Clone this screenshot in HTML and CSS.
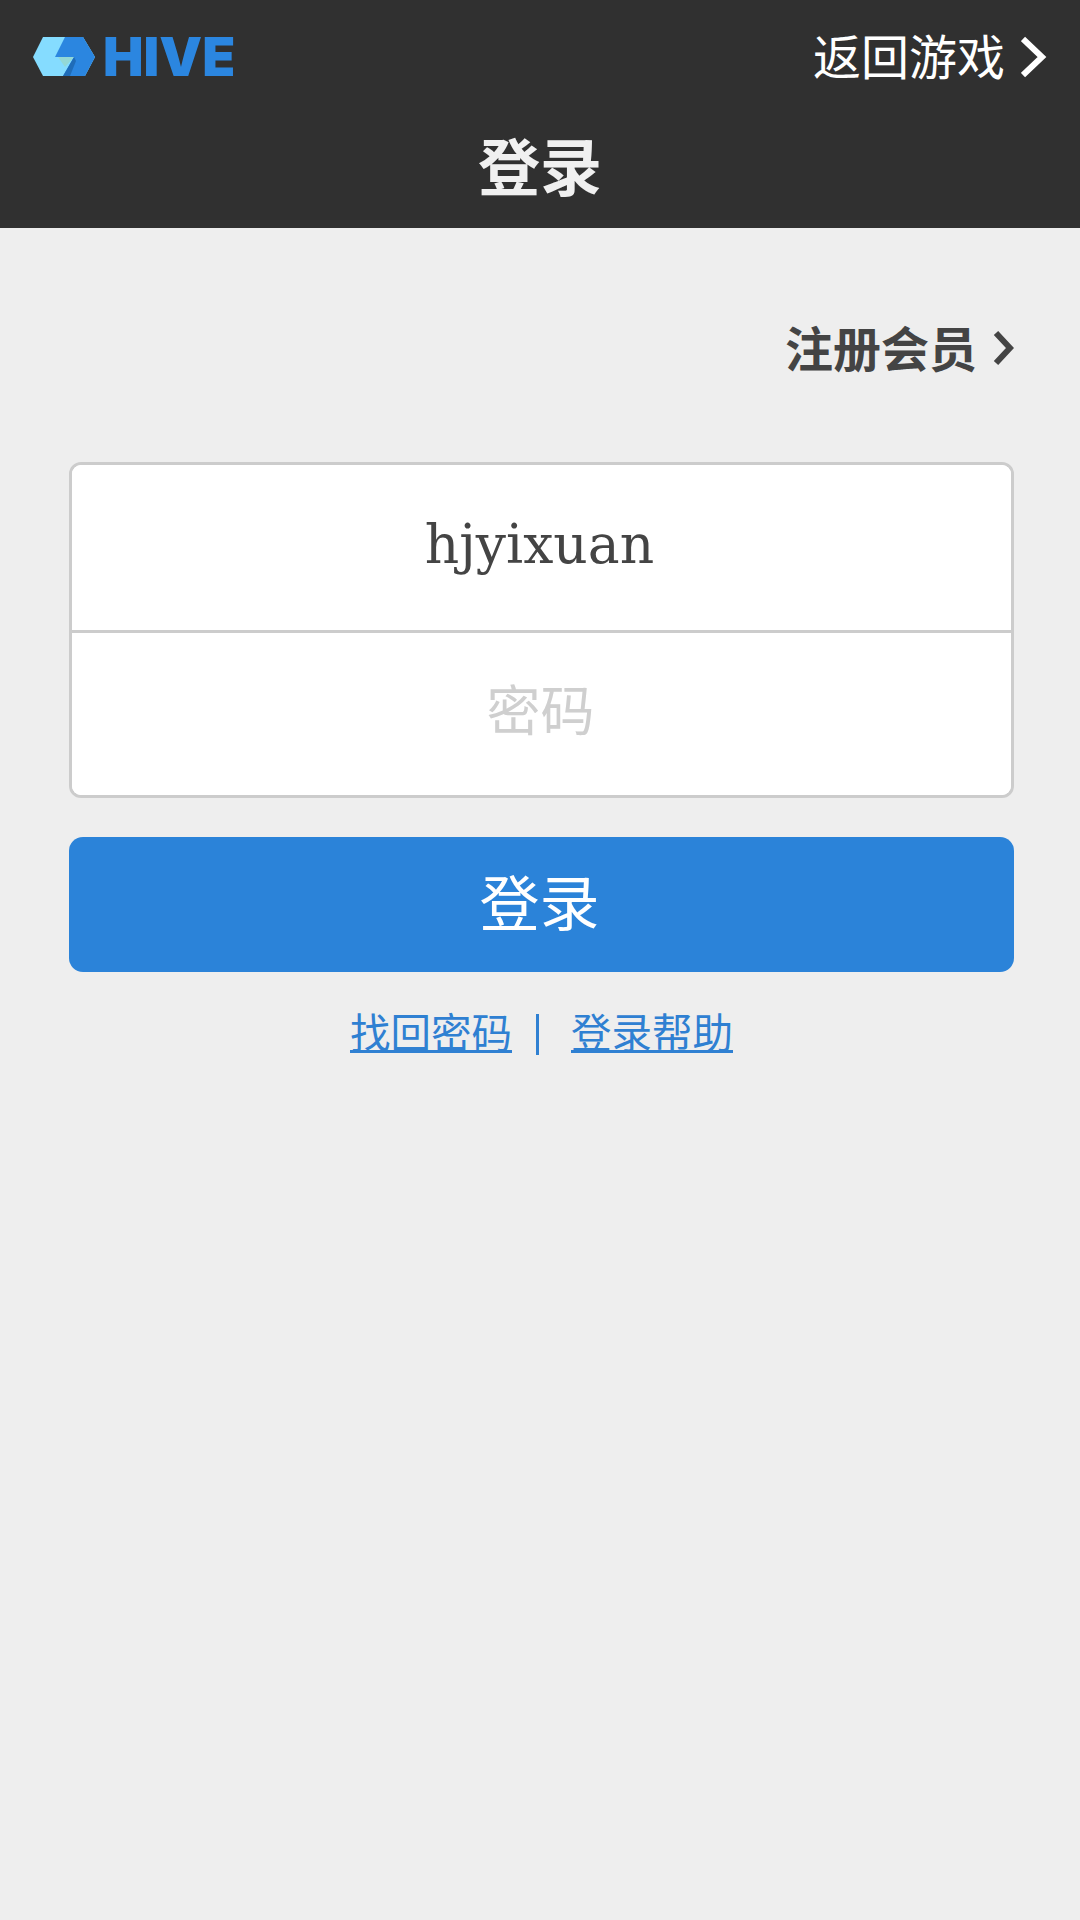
FILE: index.html
```html
<!DOCTYPE html>
<html lang="zh-CN">
<head>
    <meta charset="UTF-8">
    <meta name="viewport" content="width=device-width, initial-scale=1.0">
    <title>登录</title>
    <link rel="stylesheet" href="styles.css">
</head>
<body>

    <header class="header">
        <div class="topbar">
            <div class="logo">
                <svg class="logo-mark" width="62" height="39" viewBox="0 0 62 39">
                    <path d="M10 0H50L62 20L52 39H10L0 20Z" fill="#85dcff"/>
                    <path d="M32 0H50L62 20L52 39H30L41 20H22Z" fill="#2b86e0"/>
                    <path d="M25 20H41L32 30Z" fill="#93d8d6"/>
                    <path d="M41 20L30 39H37L43 24Z" fill="#1f6cb8"/>
                </svg>
                <span class="logo-text">HIVE</span>
            </div>
            <a class="back" href="#">
                返回游戏
                <svg class="chevron" width="28" height="44" viewBox="0 0 28 44">
                    <path d="M2 4L21 22L2 40" fill="none" stroke="#fff" stroke-width="6"/>
                </svg>
            </a>
        </div>
        <h1 class="title">登录</h1>
    </header>

    <main class="content">
        <div class="register-row">
            <a class="register" href="#">
                注册会员
                <svg class="chevron" width="22" height="38" viewBox="0 0 22 38">
                    <path d="M4 4L18 19L4 34" fill="none" stroke="#444" stroke-width="6"/>
                </svg>
            </a>
        </div>

        <form class="login-form">
            <div class="fields">
                <input class="field" type="text" value="hjyixuan">
                <input class="field field-password" type="password" placeholder="密码">
            </div>
            <button class="submit" type="button">登录</button>
        </form>

        <div class="links">
            <a href="#">找回密码</a>
            <span class="sep"></span>
            <a href="#">登录帮助</a>
        </div>
    </main>

</body>
</html>
```

FILE: styles.css
```css
* {
    margin: 0;
    padding: 0;
    box-sizing: border-box;
    font-family: "Noto Sans CJK SC", "Noto Sans", sans-serif;
}

body {
    width: 1080px;
    min-height: 1920px;
    background: #eeeeee;
}

.header {
    height: 228px;
    background: #303030;
    color: #fff;
}

.topbar {
    height: 108px;
    padding: 0 33px;
    display: flex;
    justify-content: space-between;
    align-items: center;
}

.logo {
    display: flex;
    align-items: center;
    gap: 8px;
    margin-top: 5px;
}

.logo-text {
    font-family: Inter, "Liberation Sans", sans-serif;
    font-size: 54px;
    font-weight: 900;
    line-height: 40px;
    color: #2b86e0;
}

.back {
    display: flex;
    align-items: center;
    gap: 16px;
    margin-right: -2px;
    color: #fff;
    font-size: 48px;
    text-decoration: none;
}

.back .chevron {
    margin-top: 6px;
}

.title {
    margin-top: 6px;
    text-align: center;
    font-size: 62px;
    font-weight: 700;
    line-height: 100px;
    color: #f0f0f0;
}

.content {
    padding: 84px 66px 0 69px;
}

.register-row {
    display: flex;
    justify-content: flex-end;
}

.register {
    display: flex;
    align-items: center;
    gap: 15px;
    color: #444;
    font-size: 48px;
    font-weight: 700;
    line-height: 68px;
    text-decoration: none;
}

.register .chevron {
    margin-top: 3px;
}

.login-form {
    margin-top: 82px;
}

.fields {
    border: 3px solid #cccccc;
    border-radius: 12px;
    background: #fff;
    overflow: hidden;
}

.field {
    display: block;
    width: 100%;
    height: 165px;
    padding: 0 4px 7px 0;
    border: none;
    outline: none;
    background: #fff;
    text-align: center;
    font-family: "DejaVu Serif", serif;
    font-size: 53.5px;
    color: #444;
}

.field-password {
    height: 165px;
    padding: 0 2px 14px 0;
    border-top: 3px solid #cccccc;
    font-family: "Noto Sans CJK SC", sans-serif;
    font-size: 54px;
}

.field-password::placeholder {
    color: #cfcfcf;
}

.submit {
    display: block;
    width: 100%;
    height: 135px;
    margin-top: 39px;
    padding: 0 4px 10px 0;
    border: none;
    border-radius: 14px;
    background: #2b83d9;
    color: #fff;
    font-size: 60px;
    cursor: pointer;
}

.links {
    margin-top: 28px;
    display: flex;
    justify-content: center;
    align-items: center;
    font-size: 40.5px;
    line-height: 62px;
}

.links a {
    color: #2f80d2;
    text-decoration-thickness: 3px;
}

.sep {
    width: 3px;
    height: 41px;
    margin: 6px 32px 0 24px;
    background: #2f80d2;
}
```
